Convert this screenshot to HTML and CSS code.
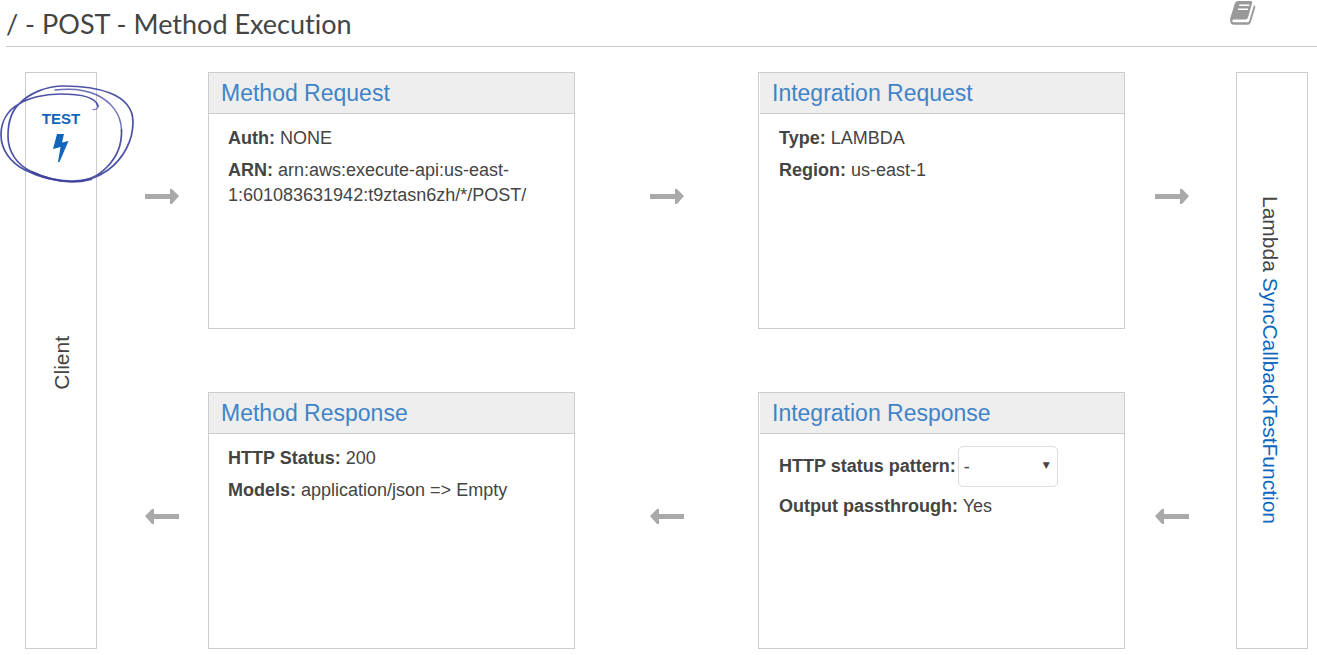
FILE: index.html
```html
<!DOCTYPE html>
<html lang="en">
<head>
<meta charset="utf-8">
<title>Method Execution</title>
<link rel="stylesheet" href="styles.css">
</head>
<body>
<header class="page-header">
  <h1 class="page-title">/ - POST - Method Execution</h1>
  <a class="docs-link" href="#" aria-label="Documentation">
    <svg class="docs-icon" viewBox="0 0 26 25" aria-hidden="true">
      <path fill="#999" d="M8 1H20.500q2.200 0 1.600 2.200L18 17.500q-.6 2-2.600 2H3.800q-1.800 0-1.500 1.600.3 1.200 1.700 1.200H17.500q1.300 0 1.700-1.300L24 5q1.800.8 1.200 2.800L20.800 22.300q-.8 2.500-3 2.500H4Q.5 24.500.200 21.300V18.500L4.800 3.500Q5.600 1 8 1Z"/>
      <path stroke="#fff" stroke-width="1.600" d="M9.300 5.300H19.300M8 9.300H18"/>
    </svg>
  </a>
</header>
<main class="flow">
  <section class="endpoint client">
    <a class="test-link" href="#">TEST
      <svg class="bolt" viewBox="0 0 16 28" aria-hidden="true"><path fill="#1166bb" d="M4 0H11L9 8.500L15.500 7L6.500 28H5L7.500 13L0 15Z"/></svg>
    </a>
    <span class="vertical vertical-up">Client</span>
    <svg class="scribble" viewBox="0 0 136 102" aria-hidden="true">
      <g fill="none" stroke="#3a3f9c" stroke-linecap="round">
        <path stroke-width="1.700" opacity=".9" d="M98 23C96 14 80 11 60 11C44 11 28 15 19 21C8 27 1 38 1 52C1 67 11 80 25 87C39 94 56 98.500 72 98.500C86 98.500 97 95 108 87C123 76 133 58 133 39C133 25 125 16 110 10C97 5 81 3 64 3C45 3 29 11 20 20C11 28 8 39 8 53C8 69 17 82 32 89C45 95 58 98.500 72 98.500C87 98.500 97 94 107 84C118 73 122 61 121.500 47"/>
        <path stroke-width="1.500" opacity=".75" d="M121.500 47C121 31 111 19 97 12C86 7 72 5 55 7"/>
        <path stroke-width="1.500" opacity=".6" d="M93 26.500Q98 27 98 23"/>
        <path stroke-width="2.500" opacity=".8" d="M32 89Q49 97.500 72 98.500Q82 98.500 91 96"/>
      </g>
    </svg>
  </section>

  <div class="arrow arrow-start"><svg class="arrow-icon" viewBox="0 0 34 15"><path fill="#a9a9a9" d="M0 5H25V0H27L34 7L27 15H25V10H0Z"/></svg></div>
  <section class="card">
    <h2 class="card-title"><a href="#">Method Request</a></h2>
    <div class="card-body">
      <p><b>Auth:</b> NONE</p>
      <p><b>ARN:</b> arn:aws:execute-api:us-east-<wbr>1:601083631942:t9ztasn6zh/*/POST/</p>
    </div>
  </section>
  <div class="arrow"><svg class="arrow-icon" viewBox="0 0 34 15"><path fill="#a9a9a9" d="M0 5H25V0H27L34 7L27 15H25V10H0Z"/></svg></div>
  <section class="card card-inset">
    <h2 class="card-title"><a href="#">Integration Request</a></h2>
    <div class="card-body">
      <p><b>Type:</b> LAMBDA</p>
      <p><b>Region:</b> us-east-1</p>
    </div>
  </section>
  <div class="arrow arrow-end"><svg class="arrow-icon" viewBox="0 0 34 15"><path fill="#a9a9a9" d="M0 5H25V0H27L34 7L27 15H25V10H0Z"/></svg></div>

  <section class="endpoint backend">
    <span class="vertical">Lambda <a href="#">SyncCallbackTestFunction</a></span>
  </section>

  <div class="arrow arrow-start"><svg class="arrow-icon" viewBox="0 0 34 15"><path fill="#a9a9a9" d="M34 5H9V0H7L0 7L7 15H9V10H34Z"/></svg></div>
  <section class="card">
    <h2 class="card-title"><a href="#">Method Response</a></h2>
    <div class="card-body">
      <p><b>HTTP Status:</b> 200</p>
      <p><b>Models:</b> application/json =&gt; Empty</p>
    </div>
  </section>
  <div class="arrow"><svg class="arrow-icon" viewBox="0 0 34 15"><path fill="#a9a9a9" d="M34 5H9V0H7L0 7L7 15H9V10H34Z"/></svg></div>
  <section class="card card-inset">
    <h2 class="card-title"><a href="#">Integration Response</a></h2>
    <div class="card-body">
      <div class="field">
        <label for="pattern">HTTP status pattern:</label>
        <span class="select-wrap"><select id="pattern"><option>-</option></select></span>
      </div>
      <p><b>Output passthrough:</b> Yes</p>
    </div>
  </section>
  <div class="arrow arrow-end"><svg class="arrow-icon" viewBox="0 0 34 15"><path fill="#a9a9a9" d="M34 5H9V0H7L0 7L7 15H9V10H34Z"/></svg></div>
</main>
</body>
</html>
```
FILE: styles.css
```css
* { box-sizing: border-box; }
body {
  margin: 0;
  background: #fff;
  color: #444;
  font: 18px/25px "Liberation Sans", Arial, sans-serif;
}
a { color: #1166bb; text-decoration: none; }
h1, h2, p { margin: 0; }

.page-header {
  display: flex;
  justify-content: space-between;
  align-items: flex-start;
  margin-left: 6px;
  padding-right: 61px;
  border-bottom: 1px solid #ccc;
}
.page-title {
  padding: 6px 0 4px;
  font: 400 27px/36px Lato, sans-serif;
  font-variant-ligatures: none;
}
.docs-link { display: block; }
.docs-icon { display: block; width: 26px; height: 25px; }

.flow {
  display: grid;
  grid-template-columns: 72px 111fr 367fr 183fr 367fr 111fr 72px;
  row-gap: 63px;
  padding: 25px 9px 6px 25px;
}
.endpoint {
  position: relative;
  grid-row: 1 / span 2;
  display: flex;
  align-items: center;
  justify-content: center;
  border: 1px solid #ccc;
  font-size: 21px;
}
.client { grid-column: 1; padding: 4px 2px 0; }
.backend { grid-column: 7; padding-right: 4px; }
.vertical { writing-mode: vertical-rl; white-space: nowrap; }
.vertical-up { transform: rotate(180deg); }

.test-link {
  position: absolute;
  top: 36px;
  left: 0;
  width: 100%;
  display: flex;
  flex-direction: column;
  align-items: center;
  gap: 5px;
  font: bold 15px/20px "Liberation Sans", Arial, sans-serif;
}
.bolt { width: 16px; height: 28px; }
.scribble {
  position: absolute;
  top: 10px;
  left: -26px;
  width: 136px;
  height: 102px;
  pointer-events: none;
}

.arrow {
  display: flex;
  align-items: center;
  justify-content: center;
  padding-bottom: 9px;
}
.arrow-start { padding-left: 18px; }
.arrow-end { padding-right: 18px; }
.arrow-icon { width: 34px; height: 15px; }

.card { min-width: 0; min-height: 257px; border: 1px solid #ccc; }
.card-title {
  padding: 5px 12px;
  border-bottom: 1px solid #ccc;
  background: #eee;
  font-weight: 400;
  font-size: 23px;
  line-height: 30px;
}
.card-title a { color: #4183c8; }
.card-inset .card-title { margin-left: 1px; }
.card-body {
  display: flex;
  flex-direction: column;
  gap: 7px;
  padding: 12px 19px;
}
.card-inset .card-body { padding-left: 20px; }

.field {
  display: flex;
  align-items: center;
  gap: 2px;
  font-weight: bold;
}
.select-wrap { position: relative; width: 100px; }
.select-wrap::after {
  content: "▼";
  position: absolute;
  right: 8px;
  top: 7px;
  font: 9px/25px "DejaVu Sans", sans-serif;
  pointer-events: none;
}
select {
  display: block;
  appearance: none;
  width: 100%;
  height: 41px;
  padding: 0 5px;
  border: 1px solid #ddd;
  border-radius: 5px;
  background: #fff;
  color: #444;
  font: 18px "Liberation Sans", Arial, sans-serif;
}
```
